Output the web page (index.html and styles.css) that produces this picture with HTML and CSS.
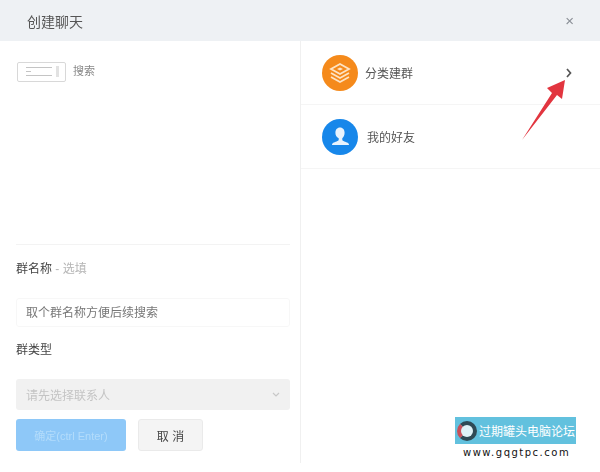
FILE: index.html
```html
<!DOCTYPE html>
<html lang="zh-CN">
<head>
    <meta charset="UTF-8">
    <meta name="viewport" content="width=device-width, initial-scale=1.0">
    <title>创建聊天</title>
    <link rel="stylesheet" href="styles.css">
</head>
<body>
    <div class="dialog">
        <div class="header">
            <h1>创建聊天</h1>
            <span class="close">&times;</span>
        </div>

        <div class="content">
            <div class="left">
                <div class="search-row">
                    <div class="scope">
                        <span class="scope-lines"><i></i><i class="short"></i><i></i></span>
                        <span class="scope-bar"></span>
                    </div>
                    <span class="search-text">搜索</span>
                </div>

                <div class="form">
                    <div class="label name-label">群名称 <span class="optional">- 选填</span></div>
                    <div class="input">取个群名称方便后续搜索</div>
                    <div class="label type-label">群类型</div>
                    <div class="select">
                        <span>请先选择联系人</span>
                        <svg class="select-arrow" width="8" height="5" viewBox="0 0 8 5"><path d="M1 1l3 3 3-3" fill="none" stroke="#c8c8c8" stroke-width="1.2"/></svg>
                    </div>
                    <div class="buttons">
                        <button class="btn-ok">确定(ctrl Enter)</button>
                        <button class="btn-cancel">取 消</button>
                    </div>
                </div>
            </div>

            <div class="right">
                <div class="row">
                    <span class="avatar orange">
                        <svg width="24" height="24" viewBox="0 0 24 24">
                            <path d="M12 3l9 5-9 5-9-5z" fill="none" stroke="#fde3c4" stroke-width="1.8"/>
                            <path d="M12 6.500l3 1.500-3 1.600L9 8z" fill="#fde3c4"/>
                            <path d="M3 12l9 5 9-5M3 16l9 5 9-5" fill="none" stroke="#fde3c4" stroke-width="1.8"/>
                        </svg>
                    </span>
                    <span class="row-text">分类建群</span>
                    <svg class="chevron" width="6" height="10" viewBox="0 0 6 10"><path d="M1 1l3.500 4L1 9" fill="none" stroke="#555" stroke-width="1.700"/></svg>
                </div>
                <div class="row">
                    <span class="avatar blue">
                        <svg width="26" height="26" viewBox="0 0 26 26">
                            <path d="M13 3.500c3 0 4.600 2.300 4.600 5.200 0 2.400-1 4.500-2.300 5.600v1.700c0 1 3.600 1.800 5.700 3 .8.500 1 1.300 1 2H5c0-.7.200-1.500 1-2 2.100-1.200 5.700-2 5.700-3v-1.700C9.400 13.200 8.400 11.100 8.400 8.700 8.400 5.800 10 3.500 13 3.500z" fill="#e8f3fd"/>
                        </svg>
                    </span>
                    <span class="row-text friend">我的好友</span>
                </div>
            </div>
        </div>

        <!-- red arrow drawn over the screenshot -->
        <svg class="mark" width="46" height="62" viewBox="0 0 46 62">
            <path d="M1 61L31 14l-5-5L44 1l-3 19-5-4z" fill="#e2353f"/>
        </svg>
    </div>

    <div class="watermark">
        <div class="wm-banner">
            <span class="wm-logo"></span>
            <span>过期罐头电脑论坛</span>
        </div>
        <div class="wm-url">www.gqgtpc.com</div>
    </div>
</body>
</html>
```

FILE: styles.css
```css
* {
    box-sizing: border-box;
}

html, body {
    height: 100%;
}

body {
    margin: 0;
    font-family: "Liberation Sans", "Noto Sans CJK SC", sans-serif;
    background: #fff;
    color: #444;
    overflow: hidden;
}

/* the reference is a soft, rescaled capture */
.dialog {
    position: relative;
    width: 600px;
    height: 472px;
    filter: blur(0.5px);
}

.header {
    height: 41px;
    display: flex;
    align-items: center;
    justify-content: space-between;
    padding: 0 27px;
    background: #eef1f4;
}

h1 {
    margin: 0;
    font-size: 14px;
    font-weight: normal;
    color: #555;
}

.close {
    font-size: 15px;
    color: #8a8f96;
    margin-right: -1px;
}

.content {
    display: flex;
    height: 422px;
}

.left {
    width: 301px;
    padding: 20px 10px 0 16px;
    border-right: 1px solid #f0f0f0;
    display: flex;
    flex-direction: column;
}

.search-row {
    display: flex;
    align-items: center;
    gap: 7px;
    padding-left: 1px;
    height: 21px;
}

.scope {
    width: 49px;
    height: 20px;
    display: flex;
    align-items: center;
    justify-content: space-between;
    padding: 0 6px 0 8px;
    border: 1px solid #d8d8d8;
    border-radius: 2px;
}

.scope-lines {
    display: flex;
    flex-direction: column;
    gap: 3px;
}

.scope-lines i {
    display: block;
    width: 26px;
    height: 1px;
    background: #c4c4c4;
}

.scope-lines .short {
    width: 5px;
}

.scope-bar {
    width: 3px;
    height: 11px;
    background: #e2e2e2;
}

.search-text {
    font-size: 11px;
    line-height: 15px;
    color: #888;
}

.form {
    margin-top: 162px;
    padding-top: 16px;
    border-top: 1px solid #f3f3f3;
}

.label {
    font-size: 12px;
    line-height: 16px;
    color: #444;
}

.optional {
    color: #b5b5b5;
}

.input {
    height: 29px;
    margin-top: 21px;
    padding: 0 9px 3px;
    display: flex;
    align-items: center;
    font-size: 12px;
    color: #777;
    border: 1px solid #f7f7f7;
    border-radius: 3px;
}

.type-label {
    margin-top: 15px;
}

.select {
    height: 31px;
    margin-top: 21px;
    padding: 0 10px;
    display: flex;
    align-items: center;
    justify-content: space-between;
    font-size: 12px;
    color: #c4c4c4;
    background: #f1f1f1;
    border-radius: 3px;
}

.buttons {
    display: flex;
    gap: 12px;
    margin-top: 9px;
}

button {
    height: 32px;
    border-radius: 3px;
    font-family: inherit;
    font-size: 12px;
    padding: 0;
}

.btn-ok {
    width: 110px;
    border: none;
    background: #8ec8f8;
    color: #b3dcfb;
    font-size: 11px;
}

.btn-cancel {
    width: 65px;
    border: 1px solid #eaeaea;
    background: #f4f4f4;
    color: #444;
}

.right {
    flex: 1;
}

.row {
    height: 64px;
    display: flex;
    align-items: center;
    padding: 0 28px 0 21px;
    border-bottom: 1px solid #f5f5f5;
}

.avatar {
    width: 36px;
    height: 36px;
    border-radius: 50%;
    display: flex;
    align-items: center;
    justify-content: center;
    flex-shrink: 0;
}

.orange {
    background: #f58a1b;
}

.blue {
    background: #1787ea;
}

.row-text {
    margin-left: 7px;
    font-size: 12px;
    color: #555;
}

.friend {
    margin-left: 9px;
}

.chevron {
    margin-left: auto;
}

.mark {
    position: absolute;
    left: 521px;
    top: 79px;
}

.watermark {
    position: absolute;
    left: 455px;
    top: 417px;
    width: 121px;
}

.wm-banner {
    height: 27px;
    display: flex;
    align-items: center;
    gap: 2px;
    padding-left: 2px;
    background: #62c1de;
    color: #fff;
    font-size: 12px;
    white-space: nowrap;
}

.wm-logo {
    width: 20px;
    height: 20px;
    flex-shrink: 0;
    border-radius: 50%;
    border: 4px solid #2f4a55;
    border-left-color: #c8505a;
    background: #dff2f7;
}

.wm-url {
    margin-top: 3px;
    padding-left: 8px;
    font-family: "DejaVu Sans", sans-serif;
    font-size: 10px;
    letter-spacing: 1.500px;
    color: #111;
    white-space: nowrap;
}
```
